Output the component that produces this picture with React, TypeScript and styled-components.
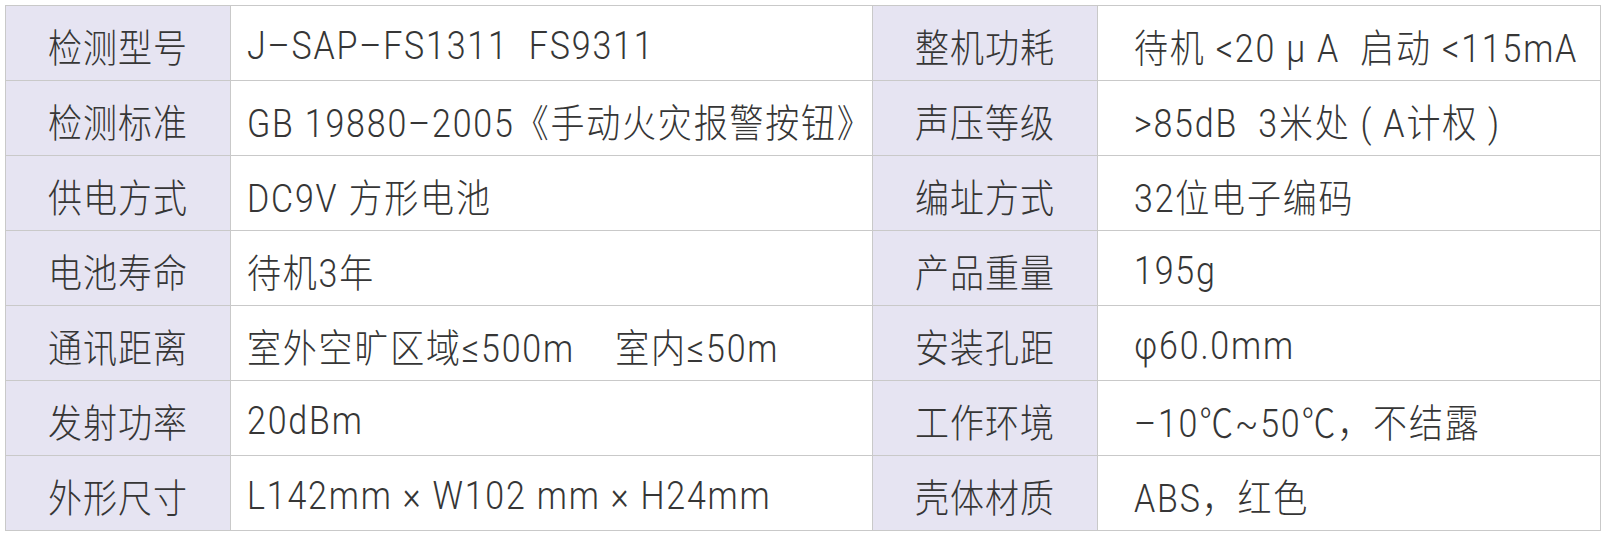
import styled, { createGlobalStyle } from 'styled-components';

/* Data */
const ROWS: Array<[string, string, string, string]> = [
    ['检测型号', 'J–SAP–FS1311  FS9311', '整机功耗', '待机 <20 μ A  启动 <115mA'],
    ['检测标准', 'GB 19880–2005《手动火灾报警按钮》', '声压等级', '>85dB  3米处 ( A计权 )'],
    ['供电方式', 'DC9V 方形电池', '编址方式', '32位电子编码'],
    ['电池寿命', '待机3年', '产品重量', '195g'],
    ['通讯距离', '室外空旷区域≤500m    室内≤50m', '安装孔距', 'φ60.0mm'],
    ['发射功率', '20dBm', '工作环境', '–10℃~50℃，不结露'],
    ['外形尺寸', 'L142mm × W102 mm × H24mm', '壳体材质', 'ABS，红色'],
];

export default function App() {
    return (
        <>
            <GlobalStyle />
            <Page>
                <SpecTable>
                    {ROWS.map(([l1, v1, l2, v2]) => (
                        <Row key = { l1 }>
                            <LabelCell><Text>{l1}</Text></LabelCell>
                            <ValueCell $indent = { 16 }><Text>{v1}</Text></ValueCell>
                            <LabelCell><Text>{l2}</Text></LabelCell>
                            <ValueCell $indent = { 36 }><Text>{v2}</Text></ValueCell>
                        </Row>
                    ))}
                </SpecTable>
            </Page>
        </>
    );
}

/* Styles */
const GlobalStyle = createGlobalStyle`
  html, body {
    margin: 0;
    background: #ffffff;
  }
  * { box-sizing: border-box; }
`;

const Page = styled.div`
  padding: 5px;
  font-family: Roboto, "Noto Sans CJK SC", sans-serif;
  color: #363636;
`;

const SpecTable = styled.div`
  width: 1596px;
  border-top: 1px solid #c9c9c9;
  border-left: 1px solid #c9c9c9;
`;

const Row = styled.div`
  display: grid;
  grid-template-columns: 225px 642px 225px 503px;
  height: 75px;
`;

const Cell = styled.div`
  display: flex;
  align-items: center;
  border-right: 1px solid #c9c9c9;
  border-bottom: 1px solid #c9c9c9;
  font-size: 34px;
  font-weight: 300;
  white-space: pre;
  overflow: hidden;
`;

const LabelCell = styled(Cell)`
  justify-content: center;
  background: #e6e4f2;
  letter-spacing: 1px;
`;

const ValueCell = styled(Cell)<{ $indent: number }>`
  padding-left: ${ (p) => p.$indent }px;
  background: #ffffff;
  letter-spacing: 1.8px;
`;

const Text = styled.span`
  display: inline-block;
  transform: scaleY(1.12);
  padding-top: 4px;
`;
